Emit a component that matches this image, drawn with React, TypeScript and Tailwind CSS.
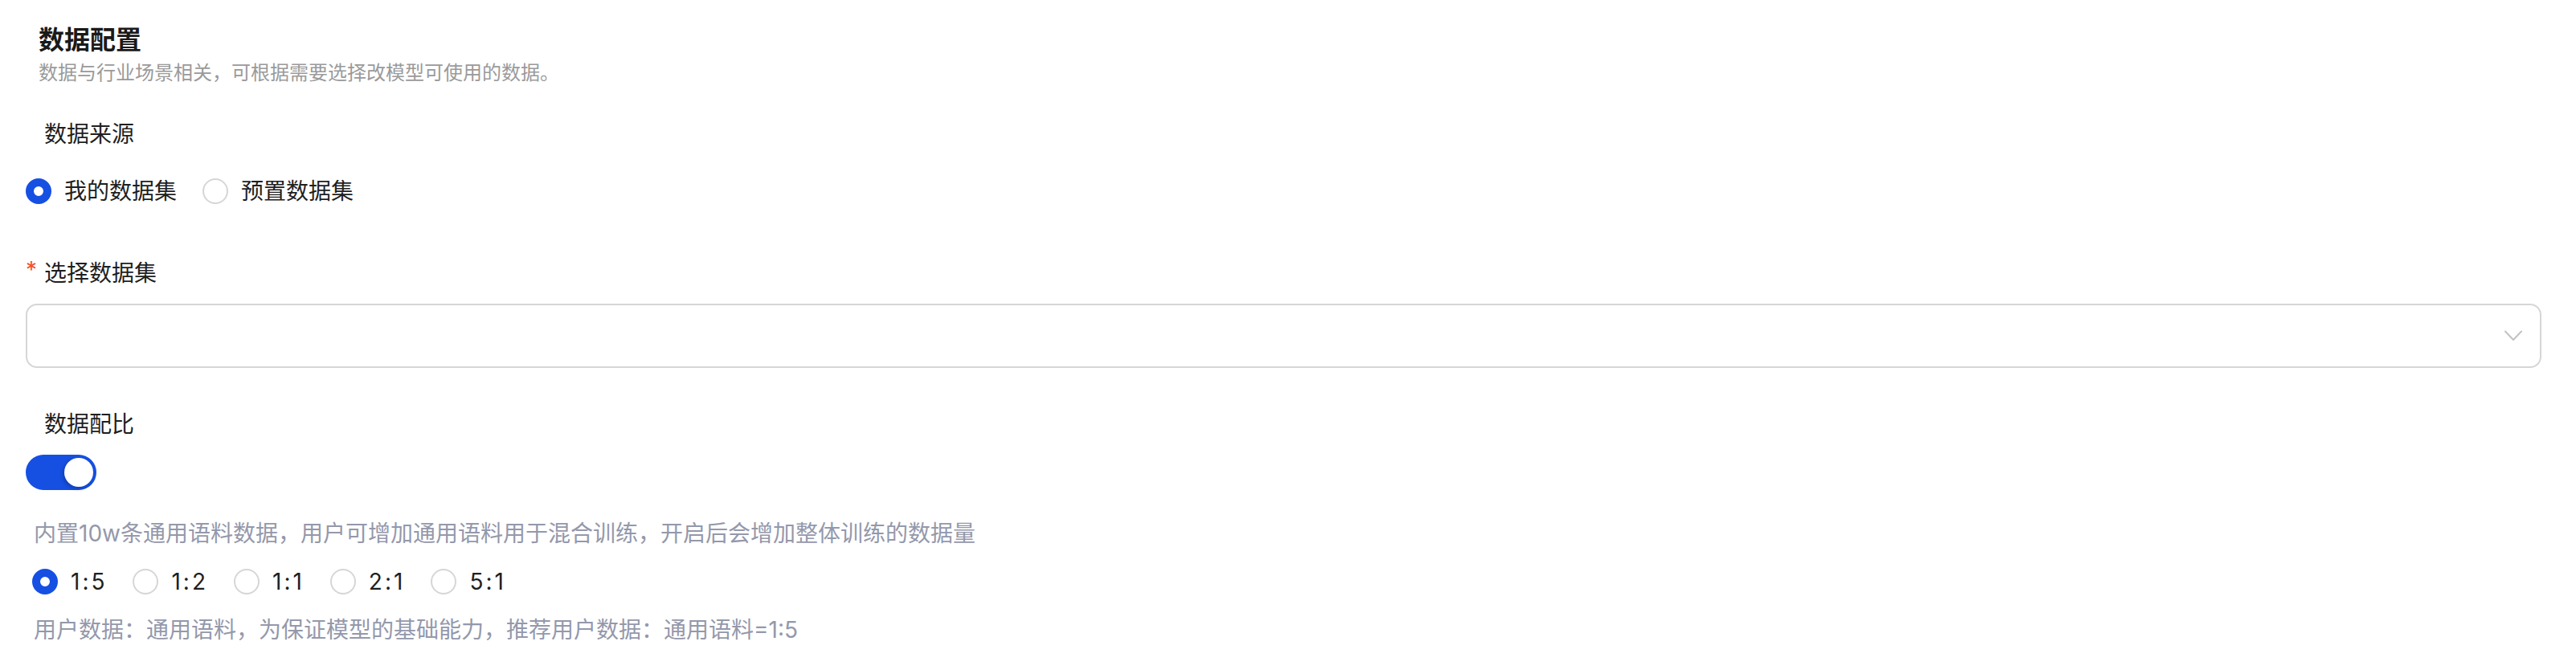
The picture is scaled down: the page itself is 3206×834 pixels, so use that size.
import React, { useState } from 'react';

const FONT = 'font-[Inter,"Noto_Sans_CJK_SC",sans-serif]';

interface RadioProps {
  label: string;
  checked: boolean;
  onClick: () => void;
  wide?: boolean;
}

const Radio: React.FC<RadioProps> = ({ label, checked, onClick, wide }) => {
  return (
    <label onClick={onClick} className="flex items-center mr-4 cursor-pointer">
      <span
        className={`box-border h-8 w-8 rounded-full bg-white shrink-0 ${
          checked ? 'border-[10px] border-[#1550e3]' : 'border-2 border-[#d6d6d6]'
        }`}
      />
      <span className={`px-4 text-[28px] leading-[40px] text-[#1f1f1f] ${wide ? 'tracking-[3px]' : ''}`}>{label}</span>
    </label>
  );
};

const FieldLabel: React.FC<{ text: string; required?: boolean }> = ({ text, required }) => {
  return (
    <div className="flex items-center h-10">
      <span className="w-[23px] text-[28px] leading-[40px] text-[#f4512f] -mt-2">{required ? '*' : ''}</span>
      <span className="text-[28px] leading-[40px] text-[#1f1f1f]">{text}</span>
    </div>
  );
};

const App: React.FC = () => {
  const [source, setSource] = useState('mine');
  const [mix, setMix] = useState(true);
  const [ratio, setRatio] = useState('1:5');
  const ratios = ['1:5', '1:2', '1:1', '2:1', '5:1'];

  return (
    <div className={`${FONT} bg-white w-full h-[834px] pl-8 pr-[43px] pt-[28px]`}>
      <div className="pl-4">
        <h2 className="text-[32px] leading-[44px] font-bold text-[#1a1a1a]">数据配置</h2>
        <p className="mt-px text-[24px] leading-[36px] text-[#9a9a9a]">数据与行业场景相关，可根据需要选择改模型可使用的数据。</p>
      </div>

      <div className="mt-[38px]">
        <FieldLabel text="数据来源" />
      </div>
      <div className="mt-[31px] flex items-center h-10">
        <Radio label="我的数据集" checked={source === 'mine'} onClick={() => setSource('mine')} />
        <Radio label="预置数据集" checked={source === 'preset'} onClick={() => setSource('preset')} />
      </div>

      <div className="mt-[62px]">
        <FieldLabel text="选择数据集" required />
      </div>
      <div className="mt-[18px] h-20 rounded-[14px] border-2 border-[#d6d6d6] bg-white flex items-center justify-end pr-[22px]">
        <svg width="22" height="14" viewBox="0 0 22 14" fill="none">
          <path d="M1 1.5L11 12L21 1.5" stroke="#c2c2c2" strokeWidth="2" strokeLinecap="round" strokeLinejoin="round" />
        </svg>
      </div>

      <div className="mt-[50px]">
        <FieldLabel text="数据配比" />
      </div>
      <button
        onClick={() => setMix(!mix)}
        className={`mt-[18px] flex items-center w-[88px] h-[44px] rounded-full px-1 ${
          mix ? 'bg-[#1550e3] justify-end' : 'bg-[#d6d6d6] justify-start'
        }`}
      >
        <span className="block h-9 w-9 rounded-full bg-white shadow-[-2px_2px_5px_rgba(0,0,0,0.22)]" />
      </button>

      <p className="mt-[34px] pl-[10px] text-[28px] leading-[40px] text-[#9498ab]">
        内置10w条通用语料数据，用户可增加通用语料用于混合训练，开启后会增加整体训练的数据量
      </p>
      <div className="mt-5 pl-2 flex items-center h-10">
        {ratios.map((r) => (
          <Radio key={r} label={r} wide checked={ratio === r} onClick={() => setRatio(r)} />
        ))}
      </div>
      <p className="mt-5 pl-[10px] text-[28px] leading-[40px] text-[#9498ab]">
        用户数据：通用语料，为保证模型的基础能力，推荐用户数据：通用语料=1:5
      </p>
    </div>
  );
};

export default App;
